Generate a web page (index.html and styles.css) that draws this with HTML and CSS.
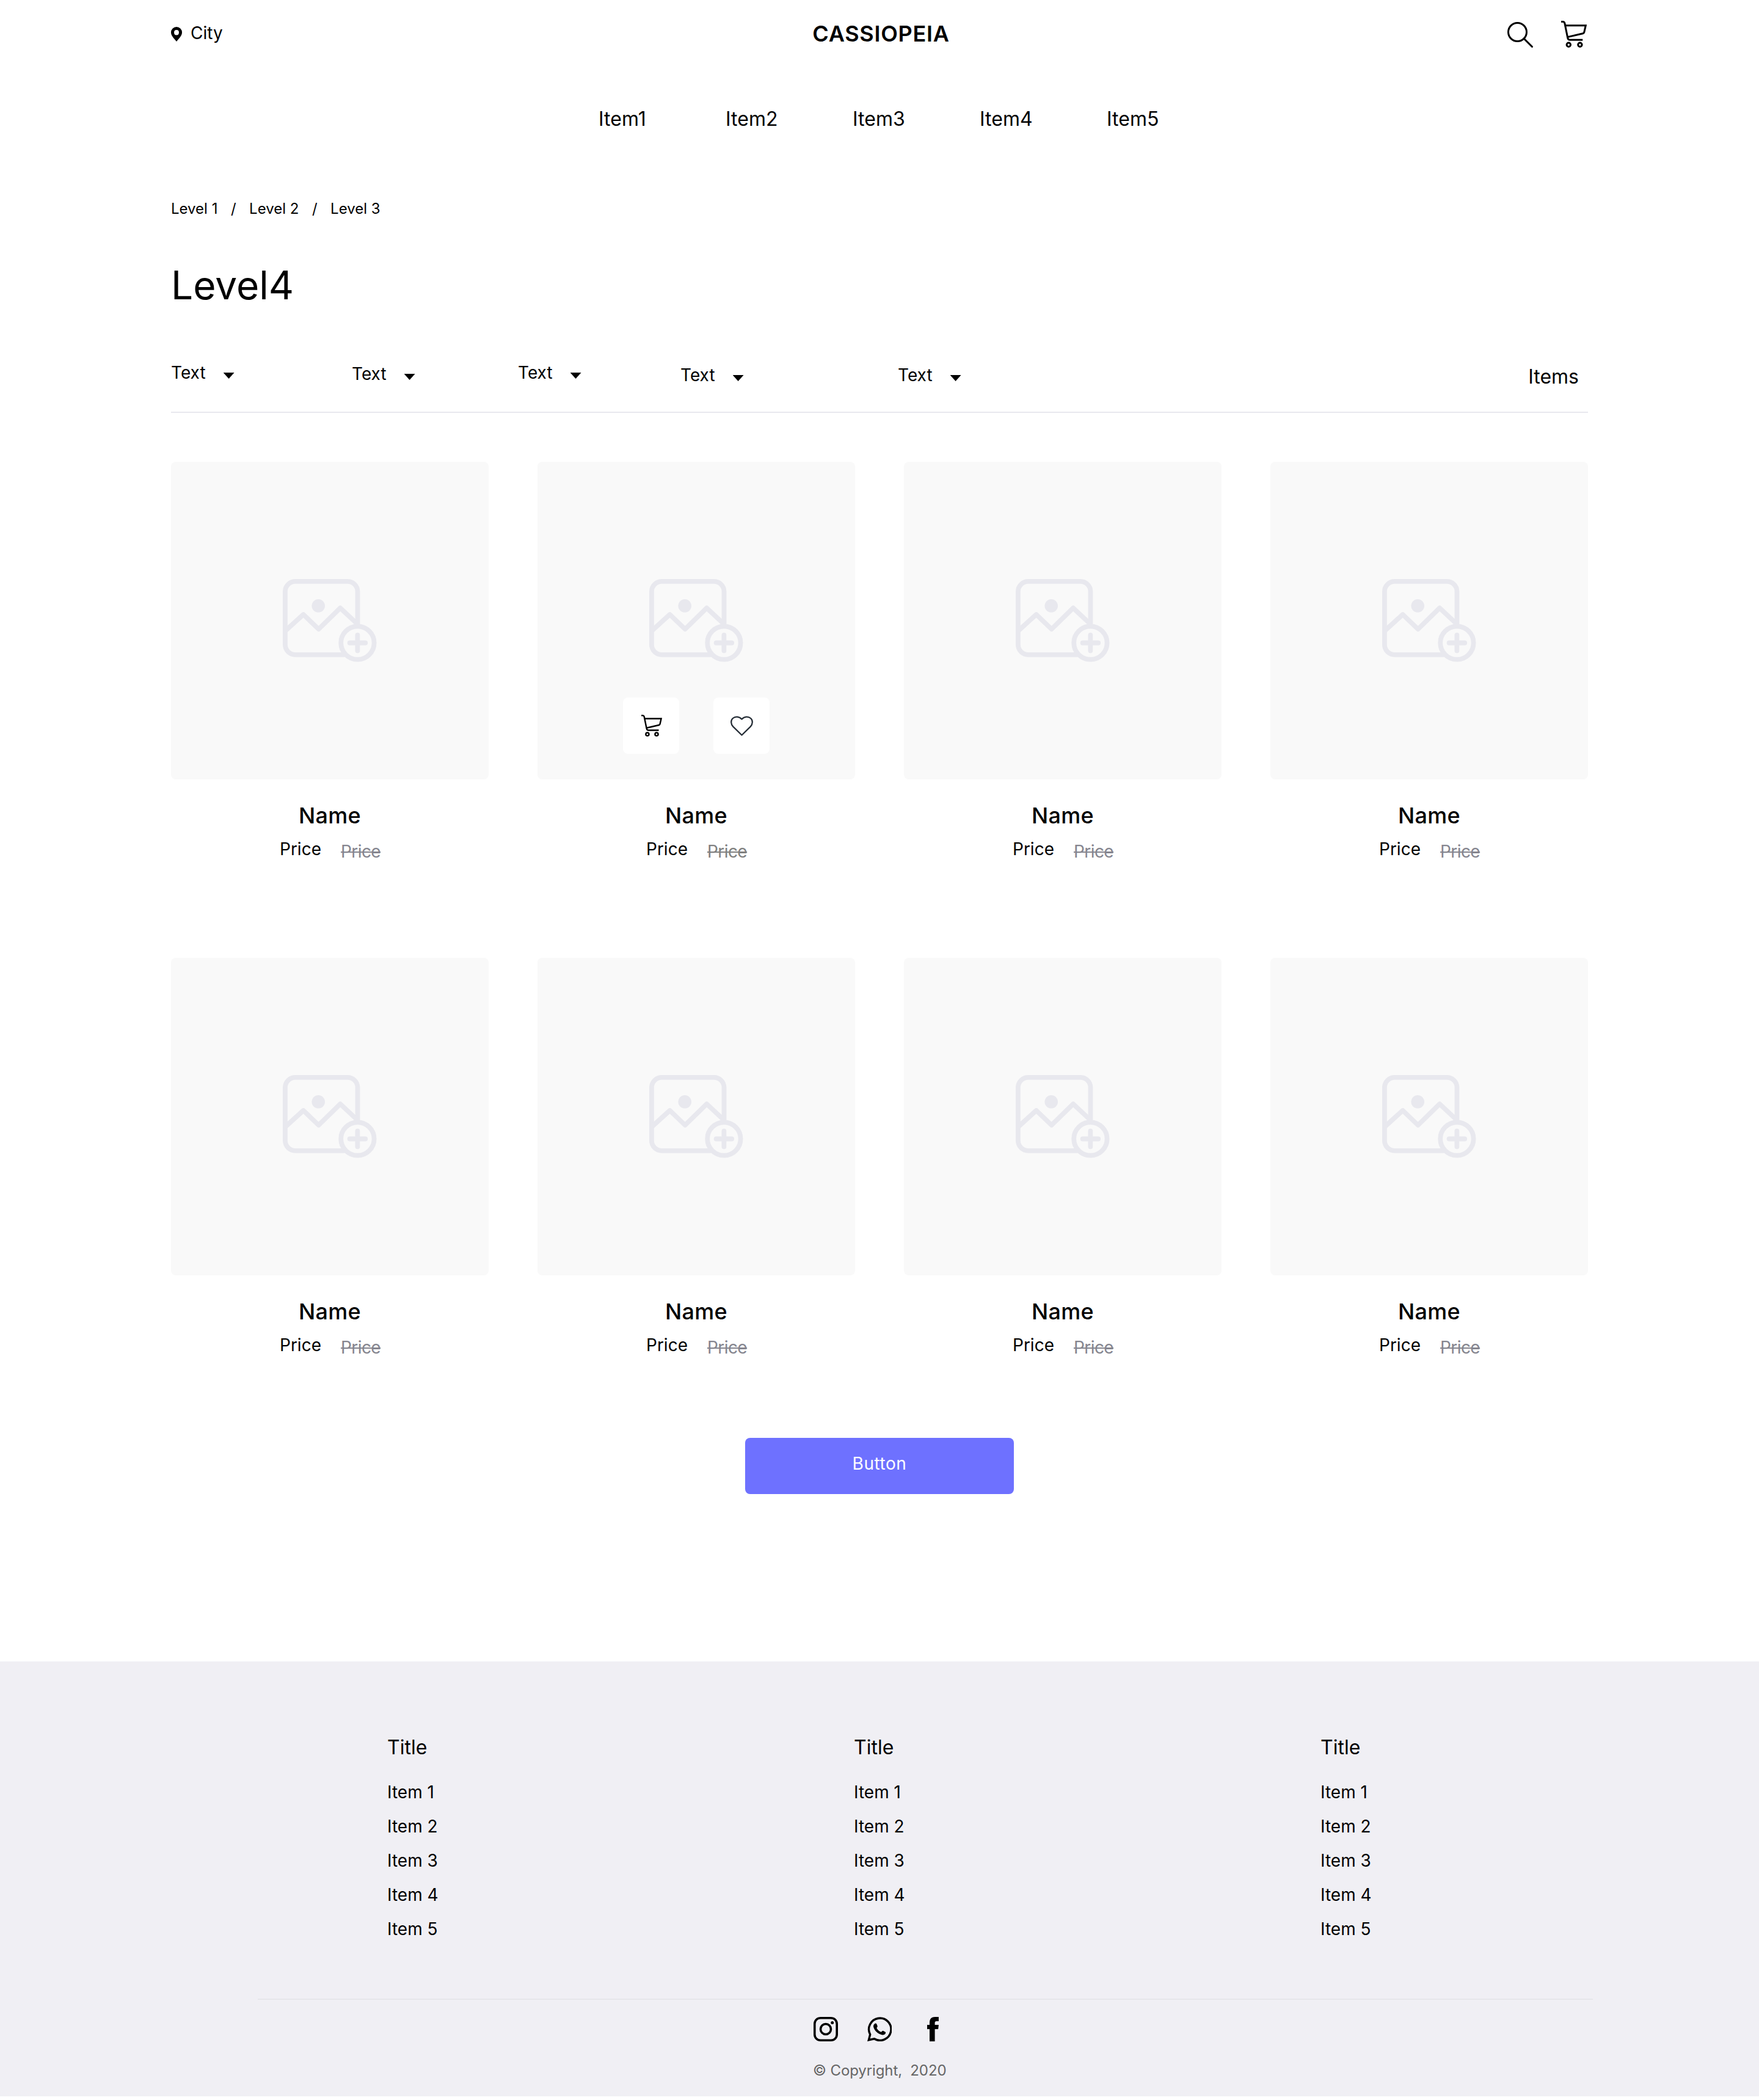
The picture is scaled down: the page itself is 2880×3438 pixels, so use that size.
FILE: index.html
```
<!DOCTYPE html>
<html lang="en">
<head>
<meta charset="utf-8">
<title>Cassiopeia</title>
<link rel="stylesheet" href="styles.css">
</head>
<body>
<svg class="sprite" aria-hidden="true">
  <symbol id="cart" viewBox="0 0 42 44">
    <g fill="none" stroke="currentColor" stroke-width="3">
      <path d="M0 1.5h2.8q2.4 0 3.1 2.6L10.800 28.2q.7 3.100 3.700 3.100H35.300"/>
      <path d="M6.600 7.700H40.300L37.800 18.600q-.4 1.700-2 2.100L10.700 26.600"/>
      <circle cx="12.300" cy="39.300" r="3.200"/>
      <circle cx="30.900" cy="39.300" r="3.200"/>
    </g>
  </symbol>
  <symbol id="placeholder" viewBox="0 0 154 136">
    <g fill="none" stroke="currentColor" stroke-width="7.800" stroke-linecap="round" stroke-linejoin="round">
      <path d="M122.500 74V20.400a16.500 16.500 0 0 0-16.500-16.500H20.400a16.500 16.500 0 0 0-16.500 16.500v86.900a16.500 16.500 0 0 0 16.500 16.500H100"/>
      <path d="M5 84L33.700 58L58.700 82L94.100 47.400L121 72.500"/>
      <circle cx="122.400" cy="104.500" r="27.200" fill="#f9f9f9"/>
      <path d="M109.600 104.500h25.600M122.400 91.700v25.600"/>
    </g>
    <circle cx="58.200" cy="43.800" r="10.800" fill="currentColor"/>
  </symbol>
</svg>

<div class="container">
  <header class="header">
    <div class="city">
      <svg class="pin" viewBox="0 0 18 24"><path fill-rule="evenodd" d="M9 0a9 9 0 0 1 9 9.200C18 14.500 12.500 19.500 9 24C5.500 19.500 0 14.500 0 9.200A9 9 0 0 1 9 0zM9 5a4 4.200 0 1 0 0 8.400A4 4.200 0 1 0 9 5z"/></svg>
      <span>City</span>
    </div>
    <div class="brand">CASSIOPEIA</div>
    <div class="tools">
      <svg class="search" viewBox="0 0 42 42"><g fill="none" stroke="#000" stroke-width="3"><circle cx="16.500" cy="16.500" r="15"/><path d="M27.200 27.200L40.500 40.500" stroke-linecap="round"/></g></svg>
      <svg class="cart"><use href="#cart"/></svg>
    </div>
  </header>

  <nav class="nav"><span>Item1</span><span>Item2</span><span>Item3</span><span>Item4</span><span>Item5</span></nav>

  <div class="crumbs"><span>Level 1</span><span>/</span><span>Level 2</span><span>/</span><span>Level 3</span></div>
  <h1 class="title">Level4</h1>

  <div class="filters">
    <div class="filter">Text<i class="arrow"></i></div>
    <div class="filter low">Text<i class="arrow"></i></div>
    <div class="filter">Text<i class="arrow"></i></div>
    <div class="filter lower">Text<i class="arrow"></i></div>
    <div class="filter lower">Text<i class="arrow"></i></div>
    <div class="count">Items</div>
  </div>

  <main class="grid">
    <article class="card"><div class="photo"><svg class="placeholder"><use href="#placeholder"/></svg></div><div class="name">Name</div><div class="prices"><span>Price</span><s class="old">Price</s></div></article>
    <article class="card"><div class="photo"><svg class="placeholder"><use href="#placeholder"/></svg>
      <div class="actions">
        <div class="action"><svg class="cart-small"><use href="#cart"/></svg></div>
        <div class="action"><svg class="heart" viewBox="0 0 37 33"><path fill="none" stroke="#252d36" stroke-width="2.300" stroke-linejoin="round" d="M18.500 31.500L4.300 17.600C.3 13.500.2 7.300 3.800 4C7.700.5 14.200.6 18.500 5.400C22.800.6 29.300.5 33.200 4C36.800 7.300 36.700 13.500 32.700 17.600Z"/></svg></div>
      </div></div><div class="name">Name</div><div class="prices"><span>Price</span><s class="old neutral">Price</s></div></article>
    <article class="card"><div class="photo"><svg class="placeholder"><use href="#placeholder"/></svg></div><div class="name">Name</div><div class="prices"><span>Price</span><s class="old">Price</s></div></article>
    <article class="card"><div class="photo"><svg class="placeholder"><use href="#placeholder"/></svg></div><div class="name">Name</div><div class="prices"><span>Price</span><s class="old">Price</s></div></article>
    <article class="card"><div class="photo"><svg class="placeholder"><use href="#placeholder"/></svg></div><div class="name">Name</div><div class="prices"><span>Price</span><s class="old">Price</s></div></article>
    <article class="card"><div class="photo"><svg class="placeholder"><use href="#placeholder"/></svg></div><div class="name">Name</div><div class="prices"><span>Price</span><s class="old">Price</s></div></article>
    <article class="card"><div class="photo"><svg class="placeholder"><use href="#placeholder"/></svg></div><div class="name">Name</div><div class="prices"><span>Price</span><s class="old">Price</s></div></article>
    <article class="card"><div class="photo"><svg class="placeholder"><use href="#placeholder"/></svg></div><div class="name">Name</div><div class="prices"><span>Price</span><s class="old">Price</s></div></article>
  </main>

  <div class="more"><button class="button">Button</button></div>
</div>

<footer class="footer">
  <div class="links">
    <div class="column"><h2>Title</h2><ul><li>Item 1</li><li>Item 2</li><li>Item 3</li><li>Item 4</li><li>Item 5</li></ul></div>
    <div class="column"><h2>Title</h2><ul><li>Item 1</li><li>Item 2</li><li>Item 3</li><li>Item 4</li><li>Item 5</li></ul></div>
    <div class="column"><h2>Title</h2><ul><li>Item 1</li><li>Item 2</li><li>Item 3</li><li>Item 4</li><li>Item 5</li></ul></div>
  </div>
  <div class="bottom">
    <div class="social">
      <svg viewBox="0 0 40 40"><g fill="none" stroke="#000" stroke-width="3.600"><rect x="1.800" y="1.800" width="36.400" height="36.400" rx="9.500"/><circle cx="20" cy="20" r="8.500"/></g><circle cx="30.700" cy="9.400" r="2.500"/></svg>
      <svg viewBox="0 0 40 40"><path fill="none" stroke="#000" stroke-width="3.400" d="M2.400 37.700L4.700 28.700A18.200 18.200 0 1 1 11.400 35.800Z"/><path d="M12 11.200c1-1 2.700-.8 3.300.4l1.300 3.100c.4 1-.1 1.900-1.300 3.200c1.500 3.200 4.300 5.700 7.500 6.900c1.500-1.900 2.200-2.500 3.200-2l3.300 1.600c1 .5 1 1.300.6 2.400c-.7 1.900-3 3-5.200 2.700c-6.700-1-13.300-7-14.600-13.200c-.4-2 .4-3.800 1.900-5.100z"/></svg>
      <svg viewBox="0 0 40 40"><path d="M14 40V20.100H10v-7H14V9.200C14 3.300 17 0 22.600 0H28.900V6.900H25.100Q22.600 6.900 22.600 9.400V13.100H28.900L28.100 20.100H22.600V40z"/></svg>
    </div>
    <div class="copyright">© Copyright,&nbsp; 2020</div>
  </div>
</footer>
</body>
</html>
```
FILE: styles.css
```
* { box-sizing: border-box; margin: 0; padding: 0; }

body {
  background: #fff;
  color: #000;
  font: 400 28px/34px Inter, "Liberation Sans", sans-serif;
}

svg { display: block; flex: none; }
.sprite { width: 0; height: 0; position: absolute; }

.container { width: 2320px; height: 2720px; margin: 0 auto; }

/* Header */
.header {
  display: grid;
  grid-template-columns: 1fr auto 1fr;
  align-items: start;
  height: 175px;
  padding-top: 33px;
}
.city { display: flex; gap: 14px; padding-top: 4px; }
.pin { width: 18px; height: 24px; margin-top: 7px; }
.brand {
  font-size: 36px;
  line-height: 44px;
  font-weight: 600;
  letter-spacing: 0.72px;
  padding-left: 5px;
}
.tools { display: flex; justify-content: flex-end; gap: 46px; padding: 1px 2px 0 0; }
.search { width: 42px; height: 42px; margin-top: 2px; }
.cart { width: 42px; height: 44px; }

/* Main navigation */
.nav {
  display: grid;
  grid-template-columns: repeat(5, 208px);
  margin-left: 700px;
  font-size: 32px;
  line-height: 39px;
}

.crumbs { display: flex; gap: 21.5px; margin-top: 113px; font-size: 24px; line-height: 29px; }
.title { margin-top: 72px; font-size: 64px; line-height: 77px; font-weight: 400; }

/* Filter bar */
.filters {
  display: grid;
  grid-template-columns: 296px 272px 266px 356px 1fr auto;
  align-items: start;
  height: 83px;
  margin-top: 88px;
  padding-right: 15px;
  border-bottom: 2px solid #e8e8ee;
}
.filter { display: flex; gap: 29px; }
.low { padding-top: 2px; }
.lower { padding-top: 4px; }
.arrow { width: 18px; height: 10px; margin-top: 17px; background: #000; clip-path: polygon(0 0, 100% 0, 50% 100%); }
.count { padding-top: 4px; font-size: 32px; line-height: 39px; }

/* Products */
.grid {
  display: grid;
  grid-template-columns: repeat(4, 520px);
  grid-auto-rows: 732px;
  gap: 80px;
  margin-top: 80px;
}
.photo {
  position: relative;
  display: flex;
  align-items: center;
  justify-content: center;
  height: 520px;
  border-radius: 8px;
  background: #f9f9f9;
}
.placeholder { width: 154px; height: 136px; color: #e8e8ee; }
.actions {
  position: absolute;
  left: 0;
  right: 0;
  bottom: 42px;
  display: flex;
  justify-content: center;
  gap: 56px;
}
.action {
  display: flex;
  align-items: center;
  justify-content: center;
  width: 92px;
  height: 92px;
  border-radius: 8px;
  background: #fff;
}
.cart-small { width: 34px; height: 36px; margin-left: 2px; }
.heart { width: 37px; height: 33px; }
.name {
  margin-top: 37px;
  font-size: 36px;
  line-height: 44px;
  font-weight: 500;
  letter-spacing: 0.36px;
  text-align: center;
}
.prices { display: flex; gap: 32px; margin-top: 16px; padding-left: 178px; }
.old { padding-top: 4px; color: #85858f; letter-spacing: -0.56px; }
.neutral { color: #808080; }

.more { display: flex; justify-content: center; margin-top: 54px; }
.button {
  width: 440px;
  height: 92px;
  padding-bottom: 8px;
  border: 0;
  border-radius: 8px;
  background: #6e71ff;
  color: #fff;
  font: inherit;
  letter-spacing: 0.56px;
}

/* Footer */
.footer { height: 712px; padding-top: 121px; background: #f0eff4; }
.links { display: grid; grid-template-columns: repeat(3, 764px); margin-left: 634px; }
.column h2 { font-size: 32px; line-height: 39px; font-weight: 400; }
.column ul { display: grid; gap: 22px; margin-top: 37px; list-style: none; }
.bottom {
  width: 2186px;
  margin: 97px 0 0 422px;
  padding: 28px 0 0 909px;
  border-top: 2px solid #e6e6ea;
}
.social { display: flex; gap: 48px; padding-left: 1px; }
.social svg { width: 40px; height: 40px; }
.copyright {
  margin-top: 33px;
  color: #666;
  font-size: 24px;
  line-height: 29px;
  letter-spacing: -0.1px;
  white-space: nowrap;
}
```
